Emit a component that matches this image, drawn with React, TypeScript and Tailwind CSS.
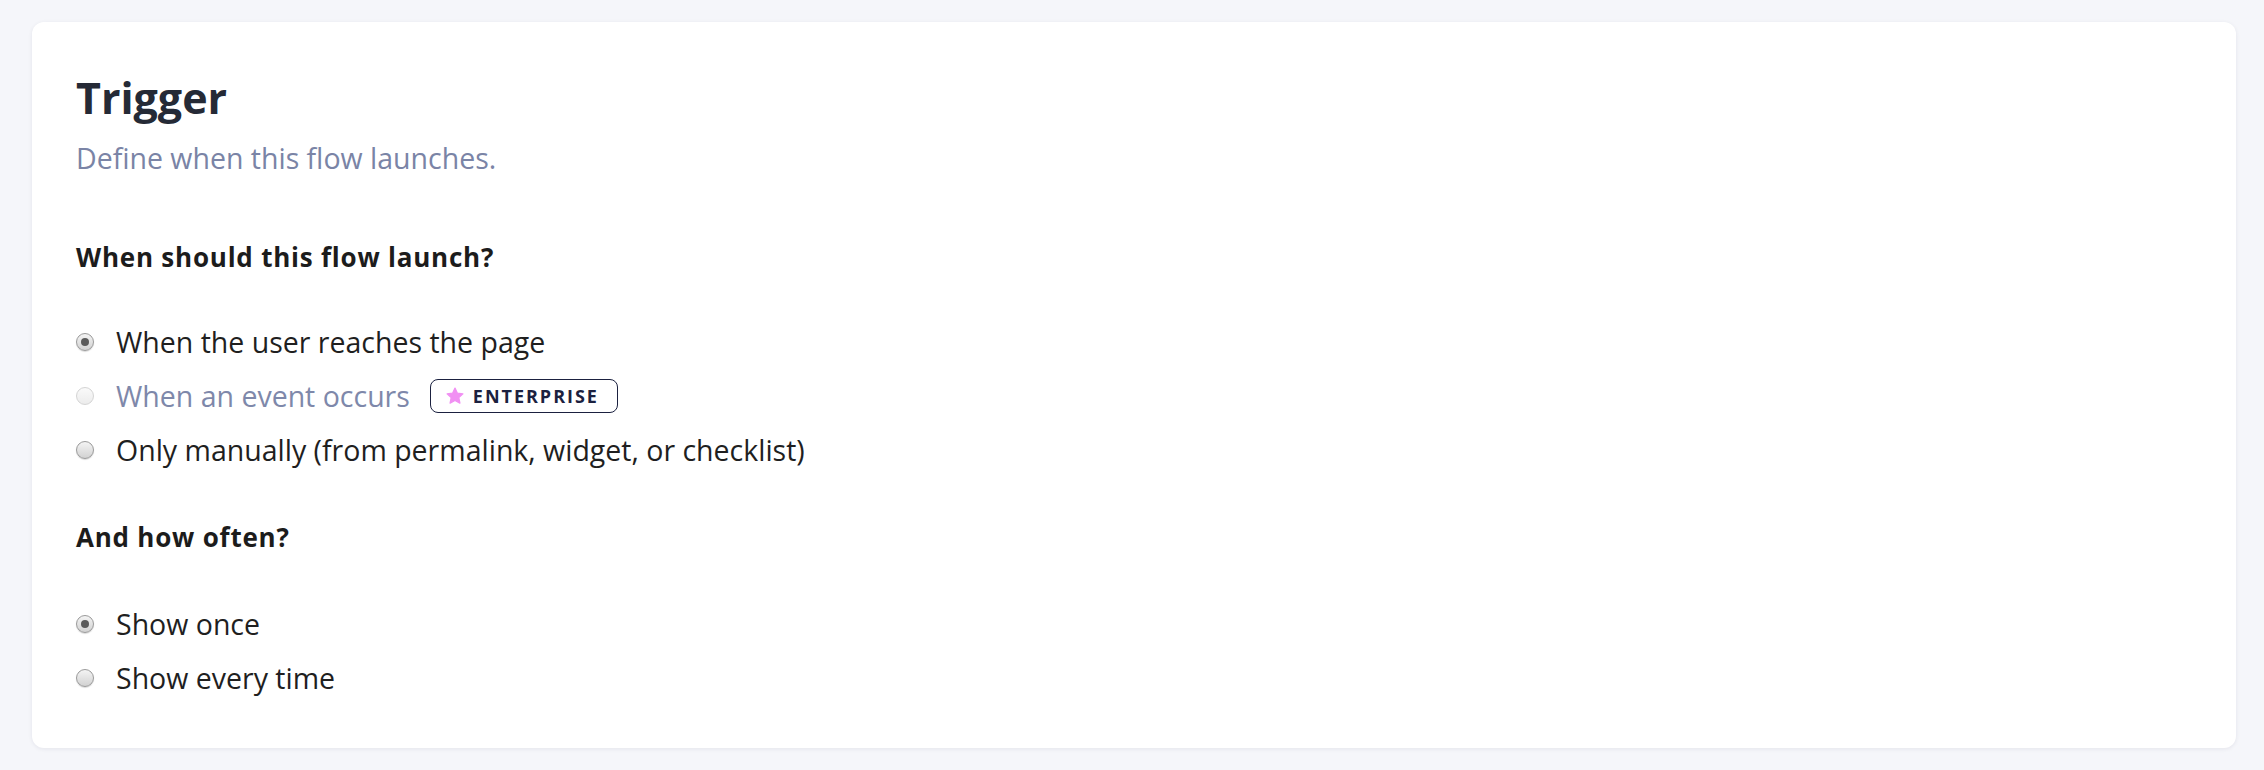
import React from "react";

type Option = {
  label: string;
  checked?: boolean;
  disabled?: boolean;
  badge?: boolean;
};

const launchOptions: Option[] = [
  { label: "When the user reaches the page", checked: true },
  { label: "When an event occurs", disabled: true, badge: true },
  { label: "Only manually (from permalink, widget, or checklist)" },
];

const frequencyOptions: Option[] = [
  { label: "Show once", checked: true },
  { label: "Show every time" },
];

function Radio({ checked, disabled }: { checked?: boolean; disabled?: boolean }) {
  if (disabled) {
    return (
      <span className="w-[18px] h-[18px] rounded-full border border-[#d4d4d4] bg-gradient-to-b from-[#fafafa] to-[#ececec] shrink-0" />
    );
  }
  return (
    <span className="w-[18px] h-[18px] rounded-full border border-[#9a9a9a] bg-gradient-to-b from-[#f4f4f4] to-[#d2d2d2] shadow-[0_1px_1px_rgba(0,0,0,0.15)] flex items-center justify-center shrink-0">
      {checked && <span className="w-[8px] h-[8px] rounded-full bg-[#5a5a5a]" />}
    </span>
  );
}

function Star() {
  return (
    <svg width="20" height="20" viewBox="0 0 24 24" className="shrink-0">
      <path
        d="M12 2.5l2.9 6.1 6.6.8-4.9 4.6 1.3 6.6L12 17.3l-5.9 3.3 1.3-6.6-4.9-4.6 6.6-.8z"
        fill="#f190f3"
        stroke="#f190f3"
        strokeWidth="1.5"
        strokeLinejoin="round"
      />
    </svg>
  );
}

function EnterpriseBadge() {
  return (
    <span className="ml-[20px] h-[34px] pl-[14px] pr-[18px] flex items-center gap-[8px] rounded-[8px] border-[1.5px] border-[#1b2140] text-[#1b2140] text-[18px] font-bold tracking-[0.11em] leading-none">
      <Star />
      ENTERPRISE
    </span>
  );
}

function OptionRow({ option }: { option: Option }) {
  return (
    <label className="flex items-center h-[36px]">
      <Radio checked={option.checked} disabled={option.disabled} />
      <span
        className={
          "ml-[22px] text-[28.5px] leading-[36px] " +
          (option.disabled ? "text-[#7e88aa]" : "text-[#1f1f1f]")
        }
      >
        {option.label}
      </span>
      {option.badge && <EnterpriseBadge />}
    </label>
  );
}

export default function App() {
  return (
    <div
      className="min-h-screen bg-[#f5f6fa] pt-[22px] pb-[22px] pl-[32px] pr-[28px]"
      style={{ fontFamily: "'Open Sans', 'Noto Sans', sans-serif" }}
    >
      <div className="bg-white rounded-[12px] shadow-[0_1px_4px_rgba(20,30,60,0.08)] pt-[50px] pb-[52px] pl-[44px] pr-[44px]">
        <h1 className="text-[43px] leading-[52px] font-bold text-[#252a36]">Trigger</h1>
        <p className="mt-[16px] text-[28.5px] leading-[36px] text-[#7a84a6]">
          Define when this flow launches.
        </p>

        <h2 className="mt-[65px] text-[26px] leading-[32px] tracking-[0.03em] font-bold text-[#1c1c1c]">
          When should this flow launch?
        </h2>
        <div className="mt-[51px] flex flex-col gap-[18px]">
          {launchOptions.map((o) => (
            <OptionRow key={o.label} option={o} />
          ))}
        </div>

        <h2 className="mt-[53px] text-[26px] leading-[32px] tracking-[0.03em] font-bold text-[#1c1c1c]">
          And how often?
        </h2>
        <div className="mt-[53px] flex flex-col gap-[18px]">
          {frequencyOptions.map((o) => (
            <OptionRow key={o.label} option={o} />
          ))}
        </div>
      </div>
    </div>
  );
}
